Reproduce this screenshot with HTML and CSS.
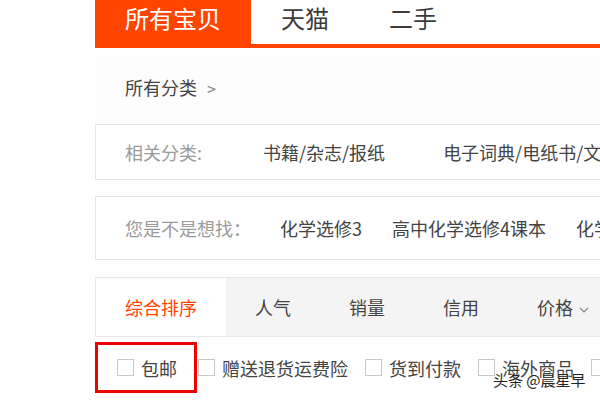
FILE: index.html
```html
<!DOCTYPE html>
<html lang="zh-CN">
<head>
  <meta charset="UTF-8">
  <meta name="viewport" content="width=device-width, initial-scale=1.0">
  <title>所有宝贝</title>
  <link rel="stylesheet" href="styles.css">
</head>
<body>
  <div class="page">

    <!-- top tabs -->
    <div class="tabs">
      <span class="tab tab-active">所有宝贝</span>
      <span class="tab">天猫</span>
      <span class="tab">二手</span>
    </div>

    <div class="crumb">所有分类 <span class="crumb-arrow">&gt;</span></div>

    <div class="box box-related">
      <span class="label label-related">相关分类:</span>
      <span class="link link-wide">书籍/杂志/报纸</span>
      <span class="link link-wide">电子词典/电纸书/文化用品</span>
    </div>

    <div class="box box-suggest">
      <span class="label label-suggest">您是不是想找：</span>
      <span class="link">化学选修3</span>
      <span class="link">高中化学选修4课本</span>
      <span class="link">化学选修5</span>
    </div>

    <!-- sort bar -->
    <div class="sort">
      <span class="sort-item sort-active">综合排序</span>
      <span class="sort-item">人气</span>
      <span class="sort-item">销量</span>
      <span class="sort-item">信用</span>
      <span class="sort-item">价格<svg class="caret" width="10" height="6" viewBox="0 0 10 6"><path d="M1 1l4 4 4-4" fill="none" stroke="#888" stroke-width="1.2"/></svg></span>
    </div>

    <div class="filters">
      <label class="filter filter-marked"><span class="check"></span>包邮</label>
      <label class="filter"><span class="check"></span>赠送退货运费险</label>
      <label class="filter"><span class="check"></span>货到付款</label>
      <label class="filter"><span class="check"></span>海外商品</label>
      <label class="filter"><span class="check"></span>二手</label>
    </div>

    <div class="watermark">头条 @晨星早</div>
  </div>
</body>
</html>
```
FILE: styles.css
```css
body{
  margin: 0;
  background: #fff;
  font-family: "Noto Sans CJK SC", "Noto Sans", sans-serif;
  color: #3c3c3c;
  overflow: hidden;
}
.page{
  position: relative;
  width: 600px;
  height: 400px;
  overflow: hidden;
  padding-left: 95px;
  box-sizing: border-box;
  white-space: nowrap;
}
.tabs{
  display: flex;
  height: 44px;
  border-bottom: 4px solid #ff4400;
  width: 700px;
}
.tab{
  padding: 0 30px;
  font-size: 24px;
  line-height: 36px;
  color: #3c3c3c;
}
.tab-active{
  background: #ff4400;
  color: #fff;
  width: 96px;
}
.crumb{
  margin-top: 9px;
  height: 67px;
  line-height: 60px;
  padding-left: 30px;
  font-size: 18px;
  color: #444;
  background: #fdfdfd;
}
.crumb-arrow{
  margin-left: 6px;
  color: #888;
  font-size: 16px;
}
.box{
  display: flex;
  align-items: center;
  border: 1px solid #e6e6e6;
  border-right: none;
  padding-left: 29px;
  font-size: 18px;
  width: 700px;
}
.box-related{
  height: 54px;
}
.box-suggest{
  margin-top: 16px;
  height: 62px;
}
.label{
  color: #9a9a9a;
}
.label-related{
  width: 138px;
}
.label-suggest{
  width: 155px;
}
.link{
  color: #444;
  margin-right: 30px;
}
.link-wide{
  margin-right: 58px;
}
.sort{
  display: flex;
  margin-top: 17px;
  height: 58px;
  background: #f4f4f4;
  border: 1px solid #e8e8e8;
  border-right: none;
  width: 700px;
}
.sort-item{
  padding: 0 29px;
  line-height: 58px;
  font-size: 18px;
  color: #444;
}
.sort-active{
  background: #fff;
  color: #ff4400;
}
.caret{
  margin-left: 6px;
  vertical-align: 2px;
}
.filters{
  display: flex;
  align-items: center;
  margin-top: 5px;
  height: 51px;
}
.filter{
  display: flex;
  align-items: center;
  font-size: 18px;
  color: #444;
  margin-right: 17px;
}
.filter-marked{
  border: 3px solid #ee0000;
  height: 45px;
  padding: 0 17px 0 19px;
  margin-right: 1px;
}
.check{
  width: 15px;
  height: 15px;
  border: 1px solid #c8c8c8;
  margin-right: 7px;
  background: #fff;
}
.watermark{
  position: absolute;
  left: 493px;
  top: 369px;
  font-size: 15px;
  color: #222;
  text-shadow: 0 0 2px #fff, 0 0 2px #fff;
}
```
